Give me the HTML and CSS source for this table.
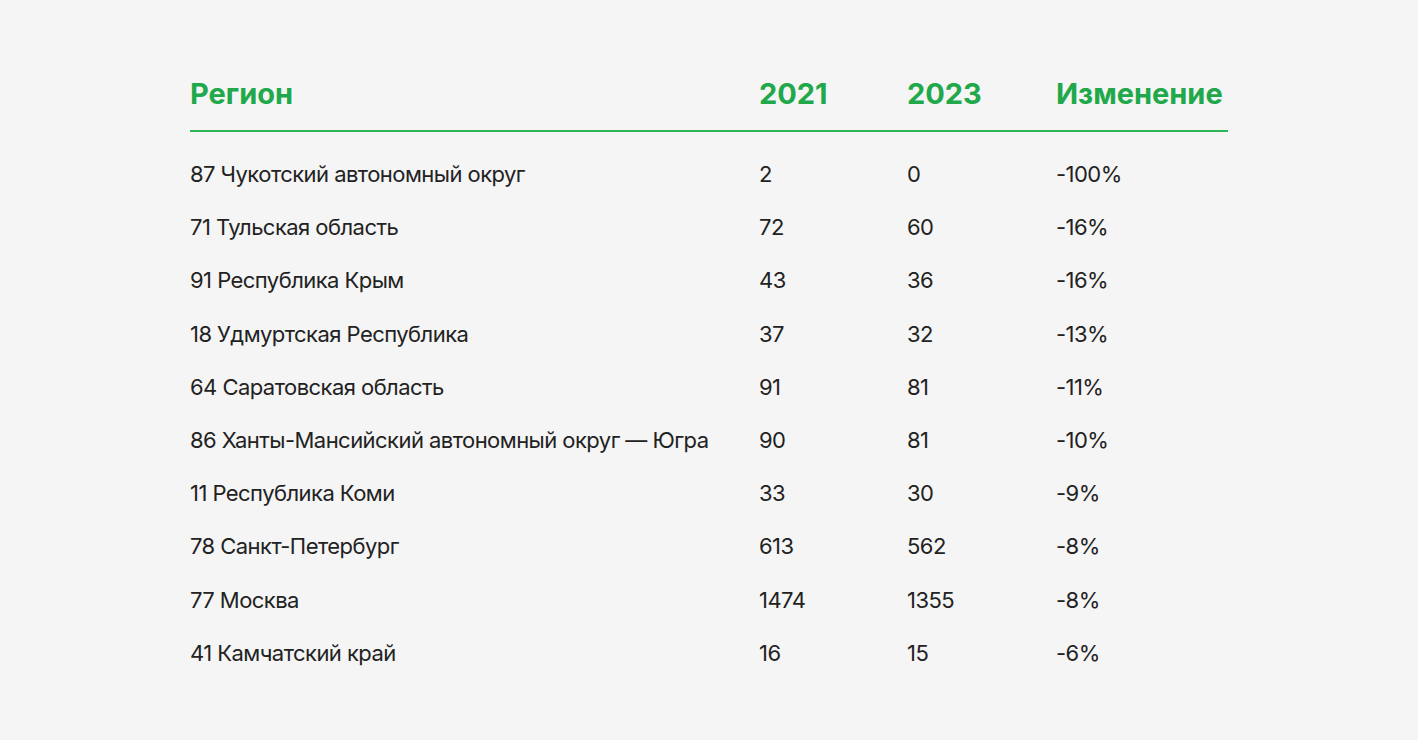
FILE: index.html
```html
<!DOCTYPE html>
<html lang="ru">
<head>
<meta charset="utf-8">
<title>Регионы</title>
<link rel="stylesheet" href="styles.css">
</head>
<body>
<main class="page">
  <div class="table">
    <div class="row head">
      <div class="cell">Регион</div>
      <div class="cell">2021</div>
      <div class="cell">2023</div>
      <div class="cell">Изменение</div>
    </div>
    <div class="body">
      <div class="row"><div class="cell">87 Чукотский автономный округ</div><div class="cell">2</div><div class="cell">0</div><div class="cell">-100%</div></div>
      <div class="row"><div class="cell">71 Тульская область</div><div class="cell">72</div><div class="cell">60</div><div class="cell">-16%</div></div>
      <div class="row"><div class="cell">91 Республика Крым</div><div class="cell">43</div><div class="cell">36</div><div class="cell">-16%</div></div>
      <div class="row"><div class="cell">18 Удмуртская Республика</div><div class="cell">37</div><div class="cell">32</div><div class="cell">-13%</div></div>
      <div class="row"><div class="cell">64 Саратовская область</div><div class="cell">91</div><div class="cell">81</div><div class="cell">-11%</div></div>
      <div class="row"><div class="cell">86 Ханты-Мансийский автономный округ — Югра</div><div class="cell">90</div><div class="cell">81</div><div class="cell">-10%</div></div>
      <div class="row"><div class="cell">11 Республика Коми</div><div class="cell">33</div><div class="cell">30</div><div class="cell">-9%</div></div>
      <div class="row"><div class="cell">78 Санкт-Петербург</div><div class="cell">613</div><div class="cell">562</div><div class="cell">-8%</div></div>
      <div class="row"><div class="cell">77 Москва</div><div class="cell">1474</div><div class="cell">1355</div><div class="cell">-8%</div></div>
      <div class="row"><div class="cell">41 Камчатский край</div><div class="cell">16</div><div class="cell">15</div><div class="cell">-6%</div></div>
    </div>
  </div>
</main>
</body>
</html>
```
FILE: styles.css
```css
html, body {
  margin: 0;
  padding: 0;
  background: #f5f5f5;
}
body {
  font-family: Inter, "Noto Sans", "Liberation Sans", sans-serif;
  color: #222222;
}
.page {
  width: 1038px;
  margin: 0 auto;
  padding-top: 76px;
}
.row {
  display: grid;
  grid-template-columns: 569px 148px 149px 1fr;
}
.head {
  font-size: 29px;
  line-height: 36px;
  font-weight: 700;
  letter-spacing: 0;
  color: #21a84b;
  padding-bottom: 18px;
  border-bottom: 2px solid #2db558;
}
.body {
  padding-top: 16px;
}
.body .row {
  font-size: 22px;
  letter-spacing: -0.55px;
  line-height: 53.2px;
  height: 53.2px;
}
.cell {
  white-space: nowrap;
}
```
